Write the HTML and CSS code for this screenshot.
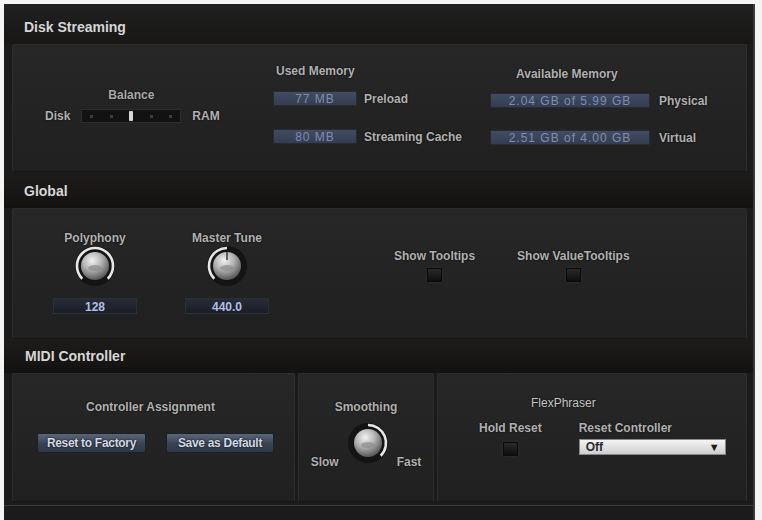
FILE: index.html
```html
<!DOCTYPE html>
<html lang="en">
<head>
    <meta charset="UTF-8">
    <title>Options</title>
    <link rel="stylesheet" href="styles.css">
</head>
<body>

<div class="window">

    <div class="section-title first">Disk Streaming</div>
    <div class="panel disk">
        <div class="balance">
            <div class="label balance-title">Balance</div>
            <span class="label bal-item">Disk</span>
            <div class="slider bal-item">
                <span class="dot"></span>
                <span class="dot"></span>
                <span class="handle"></span>
                <span class="dot"></span>
                <span class="dot"></span>
            </div>
            <span class="label bal-item">RAM</span>
        </div>

        <div class="memory used">
            <div class="label">Used Memory</div>
            <div class="mem-row first-row">
                <div class="value-box">77 MB</div>
                <span class="label">Preload</span>
            </div>
            <div class="mem-row second-row">
                <div class="value-box">80 MB</div>
                <span class="label">Streaming Cache</span>
            </div>
        </div>

        <div class="memory avail">
            <div class="label">Available Memory</div>
            <div class="mem-row first-row">
                <div class="value-box">2.04 GB of 5.99 GB</div>
                <span class="label">Physical</span>
            </div>
            <div class="mem-row second-row">
                <div class="value-box">2.51 GB of 4.00 GB</div>
                <span class="label">Virtual</span>
            </div>
        </div>
    </div>

    <div class="section-title">Global</div>
    <div class="panel global">
        <div class="knob-group">
            <div class="label">Polyphony</div>
            <svg class="knob" width="42" height="42" viewBox="0 0 42 42">
                <defs>
                    <radialGradient id="metal1" cx="40%" cy="30%" r="75%">
                        <stop offset="0" stop-color="#f2f2f2"/>
                        <stop offset="0.45" stop-color="#b4b4b4"/>
                        <stop offset="1" stop-color="#4a4a4a"/>
                    </radialGradient>
                </defs>
                <circle cx="21" cy="21" r="20" fill="#141414"/>
                <path d="M8.27 33.73 A18 18 0 1 1 33.73 33.73" fill="none" stroke="#e6e6e6" stroke-width="2.6"/>
                <circle cx="21" cy="21" r="14" fill="url(#metal1)"/>
                <ellipse cx="21" cy="23" rx="7" ry="3" fill="#8c8c8c" opacity="0.7"/>
            </svg>
            <div class="num-box">128</div>
        </div>

        <div class="knob-group">
            <div class="label">Master Tune</div>
            <svg class="knob" width="42" height="42" viewBox="0 0 42 42">
                <defs>
                    <radialGradient id="metal2" cx="40%" cy="30%" r="75%">
                        <stop offset="0" stop-color="#f2f2f2"/>
                        <stop offset="0.45" stop-color="#b4b4b4"/>
                        <stop offset="1" stop-color="#4a4a4a"/>
                    </radialGradient>
                </defs>
                <circle cx="21" cy="21" r="20" fill="#141414"/>
                <path d="M8.27 33.73 A18 18 0 0 1 21 3" fill="none" stroke="#e6e6e6" stroke-width="2.6"/>
                <circle cx="21" cy="21" r="14" fill="url(#metal2)"/>
                <ellipse cx="21" cy="23" rx="7" ry="3" fill="#8c8c8c" opacity="0.7"/>
                <line x1="21" y1="7" x2="21" y2="15" stroke="#3a3a3a" stroke-width="1.5"/>
            </svg>
            <div class="num-box">440.0</div>
        </div>

        <div class="check-group tooltips">
            <div class="label">Show Tooltips</div>
            <span class="checkbox"></span>
        </div>

        <div class="check-group">
            <div class="label">Show ValueTooltips</div>
            <span class="checkbox"></span>
        </div>
    </div>

    <div class="section-title midi-title">MIDI Controller</div>
    <div class="midi-row">
        <div class="panel assign">
            <div class="label">Controller Assignment</div>
            <div class="buttons">
                <button class="btn">Reset to Factory</button>
                <button class="btn">Save as Default</button>
            </div>
        </div>

        <div class="panel smoothing">
            <div class="label">Smoothing</div>
            <div class="smooth-row">
                <span class="label">Slow</span>
                <svg class="knob" width="42" height="42" viewBox="0 0 42 42">
                    <defs>
                        <radialGradient id="metal3" cx="40%" cy="30%" r="75%">
                            <stop offset="0" stop-color="#f2f2f2"/>
                            <stop offset="0.45" stop-color="#b4b4b4"/>
                            <stop offset="1" stop-color="#4a4a4a"/>
                        </radialGradient>
                    </defs>
                    <circle cx="21" cy="21" r="20" fill="#141414"/>
                    <path d="M21 3 A18 18 0 0 1 33.73 33.73" fill="none" stroke="#e6e6e6" stroke-width="2.6"/>
                    <circle cx="21" cy="21" r="14" fill="url(#metal3)"/>
                    <ellipse cx="21" cy="23" rx="7" ry="3" fill="#8c8c8c" opacity="0.7"/>
                </svg>
                <span class="label">Fast</span>
            </div>
        </div>

        <div class="panel flex">
            <div class="label flex-title">FlexPhraser</div>
            <div class="flex-row">
                <div class="check-group hold">
                    <div class="label">Hold Reset</div>
                    <span class="checkbox"></span>
                </div>
                <div class="reset-group">
                    <div class="label">Reset Controller</div>
                    <div class="dropdown">
                        <span>Off</span>
                        <span class="arrow">&#9660;</span>
                    </div>
                </div>
            </div>
        </div>
    </div>

</div>

</body>
</html>
```

FILE: styles.css
```css
body {
    margin: 0;
    background-color: #f4f4f4;
    font-family: "Liberation Sans", Arial, sans-serif;
    overflow: hidden;
}
.window {
    margin: 4px 0 0 4px;
    width: 751px;
    height: 520px;
    background-color: #1b1b1b;
    border-right: 2px solid #3a3a3a;
    box-sizing: border-box;
    padding: 0 6px 0 8px;
}
.label {
    font-size: 12px;
    font-weight: bold;
    line-height: 14px;
    color: #b0b0b0;
    text-shadow: 0 0 2px rgba(0, 0, 0, 0.8);
    white-space: nowrap;
}
.section-title {
    font-size: 14px;
    font-weight: bold;
    line-height: 30px;
    color: #d6d6d6;
    padding: 4px 0 2px 20px;
    margin: 0 -6px 0 -8px;
    background: linear-gradient(#1e1c1a, #141210);
}
.section-title.first {
    padding-top: 8px;
    background: linear-gradient(#202020, #181716);
}
.section-title.midi-title {
    padding-top: 2px;
    padding-left: 21px;
}
.panel {
    background: linear-gradient(#272727, #202020);
    border: 1px solid #2c2c2c;
    border-bottom-color: #151515;
    border-radius: 2px;
    box-sizing: border-box;
}

/* disk streaming */
.disk {
    height: 128px;
    display: grid;
    grid-template-columns: 260px 217px 1fr;
}
.balance {
    padding: 43px 0 0 32px;
    display: grid;
    grid-template-columns: auto 100px auto;
    column-gap: 11px;
    row-gap: 7px;
    align-items: center;
    align-self: start;
    justify-content: start;
}
.balance-title {
    grid-column: 2;
    grid-row: 1;
    text-align: center;
    color: #a8a8a8;
}
.bal-item {
    grid-row: 2;
}
.slider {
    height: 14px;
    background-color: #121212;
    border: 1px solid #2e2e2e;
    box-sizing: border-box;
    display: flex;
    justify-content: space-between;
    align-items: center;
    padding: 0 8px;
}
.dot {
    width: 3px;
    height: 3px;
    background-color: #3c3c3c;
}
.handle {
    width: 4px;
    height: 10px;
    background-color: #d8d8d8;
    border-radius: 1px;
}
.memory {
    padding-top: 19px;
}
.memory.avail {
    padding-top: 22px;
}
.memory.used > .label {
    padding-left: 3px;
}
.memory.avail > .label {
    padding-left: 26px;
}
.mem-row {
    display: flex;
    align-items: center;
    gap: 7px;
}
.mem-row.first-row {
    margin-top: 13px;
}
.mem-row.second-row {
    margin-top: 23px;
}
.avail .mem-row {
    gap: 9px;
}
.avail .mem-row.first-row {
    margin-top: 12px;
}
.avail .mem-row.second-row {
    margin-top: 22px;
}
.value-box {
    width: 84px;
    height: 15px;
    line-height: 15px;
    font-size: 12px;
    letter-spacing: 1px;
    text-align: center;
    color: #7e8cb2;
    background: linear-gradient(#414c62, #343d50);
    border: 1px solid #252a33;
    box-sizing: border-box;
}
.avail .value-box {
    width: 160px;
}

/* global */
.global {
    height: 131px;
    display: flex;
    align-items: flex-start;
    padding: 22px 0 0 40px;
}
.knob-group {
    width: 84px;
    display: flex;
    flex-direction: column;
    align-items: center;
}
.knob-group + .knob-group {
    margin-left: 48px;
}
.knob {
    display: block;
}
.num-box {
    margin-top: 11px;
    width: 84px;
    height: 16px;
    line-height: 16px;
    text-align: center;
    font-size: 12px;
    font-weight: bold;
    color: #b2bfe2;
    background: linear-gradient(#262b36, #1a1e27);
    border: 1px solid #2a2f38;
    box-sizing: border-box;
}
.check-group {
    display: flex;
    flex-direction: column;
    align-items: center;
    margin-top: 18px;
}
.check-group.tooltips {
    margin-left: 125px;
    margin-right: 42px;
}
.checkbox {
    margin-top: 5px;
    width: 15px;
    height: 14px;
    background: linear-gradient(#2a2a2a, #0e0e0e);
    border: 1px solid #0a0a0a;
    box-sizing: border-box;
    box-shadow: 0 0 3px rgba(80, 90, 100, 0.3);
}

/* midi */
.midi-row {
    display: flex;
    gap: 3px;
    margin: 0 -6px 0 -8px;
    padding: 0 6px 3px 8px;
    border-bottom: 1px solid #3a3a3a;
}
.midi-row .panel {
    height: 129px;
    display: flex;
    flex-direction: column;
    padding-top: 26px;
}
.assign {
    width: 283px;
    align-items: center;
    padding-right: 6px;
}
.buttons {
    margin-top: 19px;
    display: flex;
    gap: 20px;
    padding-left: 10px;
}
.btn {
    height: 20px;
    padding: 0;
    font-family: "Liberation Sans", Arial, sans-serif;
    font-size: 12px;
    font-weight: bold;
    color: #d2d8e4;
    background: linear-gradient(#5a6678, #3a4352 55%, #2f3744);
    border: 1px solid #1c2028;
    border-radius: 2px;
    text-shadow: 0 0 2px rgba(0, 0, 0, 0.9);
    letter-spacing: -0.3px;
}
.btn:first-child {
    width: 109px;
}
.btn:last-child {
    width: 108px;
}
.smoothing {
    width: 136px;
    align-items: center;
}
.smooth-row {
    margin-top: 8px;
    display: flex;
    align-items: flex-start;
    gap: 8px;
}
.smooth-row .label {
    margin-top: 33px;
}
.flex {
    flex: 1;
    padding-left: 41px;
}
.midi-row .flex {
    padding-top: 22px;
}
.flex-title {
    margin-left: 52px;
    font-weight: normal;
    color: #c4c4c4;
}
.flex-row {
    display: flex;
    margin-top: 11px;
    gap: 37px;
}
.check-group.hold {
    margin-top: 0;
}
.check-group.hold .checkbox {
    margin-top: 7px;
}
.dropdown {
    margin-top: 4px;
    width: 147px;
    height: 16px;
    box-sizing: border-box;
    background: linear-gradient(#f4f4f4, #cfcfcf);
    border: 1px solid #888;
    display: flex;
    justify-content: space-between;
    align-items: center;
    padding: 0 5px 0 6px;
    font-size: 12px;
    font-weight: bold;
    color: #2a2a2a;
}
.dropdown .arrow {
    font-size: 11px;
    color: #1a1a1a;
}
```
